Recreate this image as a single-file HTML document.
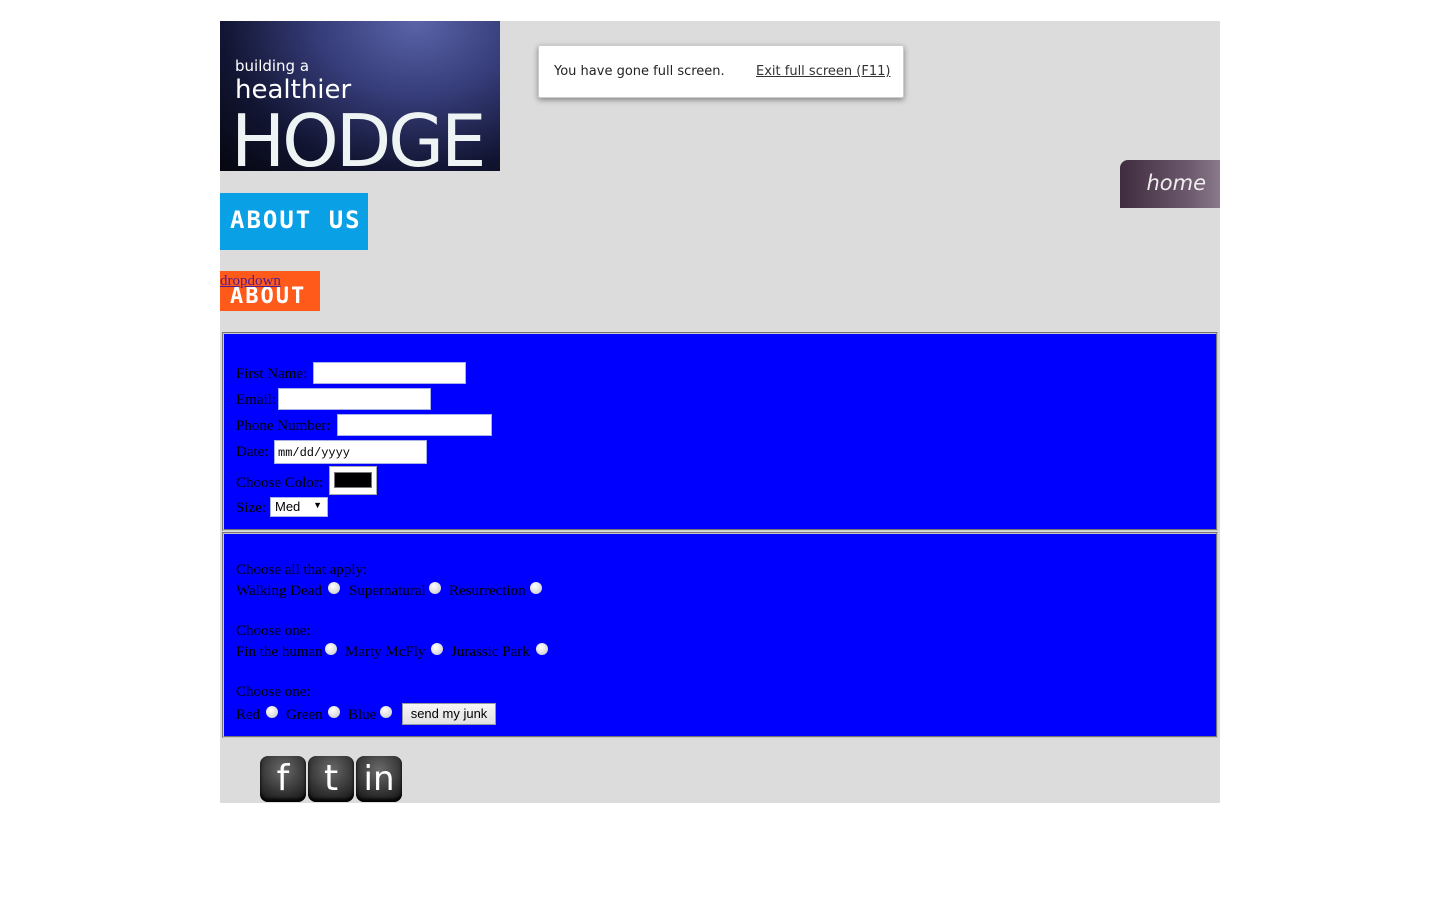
<!DOCTYPE html>
<html><head><meta charset="utf-8"><style>
body{margin:0;background:#fff;width:1440px;height:900px;position:relative;font-family:"Liberation Serif",serif;font-size:15px;overflow:hidden}
.a{position:absolute}
#page{left:220px;top:21px;width:1000px;height:782px;background:#dcdcdc}
#logo{left:220px;top:21px;width:280px;height:150px;background:radial-gradient(ellipse at 70% 0%,#5a64a8 0%,#363d7a 35%,#121532 70%,#05060f 100%);overflow:hidden;font-family:"DejaVu Sans","Liberation Sans",sans-serif;color:#fff}
.fs{background:#0000ff;border:2px groove #c8c8c8;box-sizing:border-box}
.in{background:#fff;border:1px solid #a8b0e8;box-sizing:border-box;height:22px}
.rad{position:absolute;width:12px;height:12px;border-radius:50%;background:radial-gradient(circle at 40% 35%,#fff,#ddd 60%,#bbb)}
.lbl{color:#000;font-size:15px;white-space:nowrap}
.soc{width:46px;height:46px;border-radius:8px;background:radial-gradient(circle at 50% 30%,#6a6a6a,#333 60%,#111);color:#fff;font-family:"DejaVu Sans",sans-serif;text-align:center;line-height:46px;font-size:36px;top:756px;box-shadow:inset 0 -3px 3px #000}
.pix{font-family:"DejaVu Sans Mono",monospace;font-weight:bold;color:#fff;letter-spacing:2px}
</style></head><body>
<div class="a" id="page"></div>
<div class="a" id="logo">
<div class="a" style="left:15px;top:36px;font-size:15px">building a</div>
<div class="a" style="left:15px;top:54px;font-size:26px">healthier</div>
<div class="a" style="left:11px;top:78px;font-size:72px;letter-spacing:-3px;color:#eef4f4">HODGE</div>
</div>
<div class="a" style="left:538px;top:45px;width:364px;height:51px;background:#fff;border:1px solid #ccc;border-radius:2px;box-shadow:0 2px 6px rgba(0,0,0,.4);font-family:'DejaVu Sans',sans-serif;font-size:13px;color:#222">
<span class="a" style="left:15px;top:18px">You have gone full screen.</span>
<span class="a" style="left:217px;top:18px;text-decoration:underline;color:#333">Exit full screen (F11)</span></div>
<div class="a" style="left:1120px;top:160px;width:100px;height:48px;border-top-left-radius:8px;background:linear-gradient(90deg,#3f2c3e,#6e5a6e 70%,#8a7a8a);color:#eee;font-family:'DejaVu Sans',sans-serif;font-style:italic;font-size:21px;line-height:46px;text-align:right;padding-right:14px;box-sizing:border-box">home</div>
<div class="a pix" style="left:220px;top:193px;width:148px;height:57px;background:#0aa0e6;font-size:24px;line-height:54px;padding-left:10px;box-sizing:border-box">ABOUT US</div>
<div class="a pix" style="left:220px;top:271px;width:100px;height:40px;background:#ff5a19;font-size:22px;line-height:52px;padding-left:10px;box-sizing:border-box;overflow:hidden">ABOUT</div>
<a class="a" style="left:220px;top:273px;color:#551a8b;font-size:15px;text-decoration:underline">dropdown</a>
<div class="a fs" style="left:222px;top:332px;width:996px;height:199px"></div>
<div class="a fs" style="left:222px;top:532px;width:996px;height:206px"></div>
<span class="a lbl" style="left:236px;top:366px">First Name:</span><div class="a in" style="left:313px;top:362px;width:153px"></div>
<span class="a lbl" style="left:236px;top:392px">Email:</span><div class="a in" style="left:278px;top:388px;width:153px"></div>
<span class="a lbl" style="left:236px;top:418px">Phone Number:</span><div class="a in" style="left:337px;top:414px;width:155px"></div>
<span class="a lbl" style="left:236px;top:444px">Date:</span><div class="a in" style="left:274px;top:440px;width:153px;height:24px;font-family:'Liberation Mono',monospace;font-size:12px;padding:5px 3px">mm/dd/yyyy</div>
<span class="a lbl" style="left:236px;top:475px">Choose Color:</span><div class="a" style="left:329px;top:466px;width:48px;height:29px;background:#fff;border:1px solid #aaa;box-sizing:border-box"><div style="margin:5px 4px;height:14px;background:#000;border:1px solid #777"></div></div>
<span class="a lbl" style="left:236px;top:500px">Size:</span><div class="a" style="left:270px;top:497px;width:58px;height:20px;background:#fff;border:1px solid #a8b0e8;box-sizing:border-box;font-family:'Liberation Sans',sans-serif;font-size:13px;padding:1px 4px">Med<span style="position:absolute;right:5px;top:2px;font-size:9px">▼</span></div>
<span class="a lbl" style="left:236px;top:562px">Choose all that apply:</span>
<span class="a lbl" style="left:236px;top:583px">Walking Dead</span><span class="rad" style="left:328px;top:582px"></span>
<span class="a lbl" style="left:349px;top:583px">Supernatural</span><span class="rad" style="left:429px;top:582px"></span>
<span class="a lbl" style="left:449px;top:583px">Resurrection</span><span class="rad" style="left:530px;top:582px"></span>
<span class="a lbl" style="left:236px;top:623px">Choose one:</span>
<span class="a lbl" style="left:236px;top:644px">Fin the human</span><span class="rad" style="left:325px;top:643px"></span>
<span class="a lbl" style="left:345px;top:644px">Marty McFly</span><span class="rad" style="left:431px;top:643px"></span>
<span class="a lbl" style="left:451px;top:644px">Jurassic Park</span><span class="rad" style="left:536px;top:643px"></span>
<span class="a lbl" style="left:236px;top:684px">Choose one:</span>
<span class="a lbl" style="left:236px;top:707px">Red</span><span class="rad" style="left:266px;top:706px"></span>
<span class="a lbl" style="left:286px;top:707px">Green</span><span class="rad" style="left:328px;top:706px"></span>
<span class="a lbl" style="left:348px;top:707px">Blue</span><span class="rad" style="left:380px;top:706px"></span>
<div class="a" style="left:402px;top:703px;width:94px;height:22px;background:linear-gradient(#f6f6f6,#e2e2e2);border:1px solid #999;box-sizing:border-box;font-family:'Liberation Sans',sans-serif;font-size:13px;text-align:center;line-height:20px">send my junk</div>
<div class="a soc" style="left:260px">f</div>
<div class="a soc" style="left:308px">t</div>
<div class="a soc" style="left:356px;font-size:34px">in</div>
</body></html>
